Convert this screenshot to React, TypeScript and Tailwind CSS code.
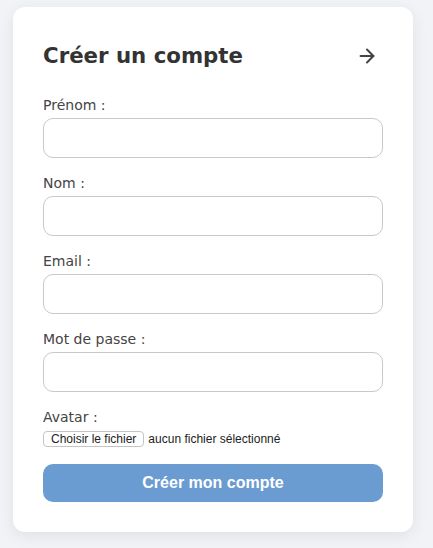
import { ArrowRight } from "lucide-react";

const fields = ["Prénom :", "Nom :", "Email :", "Mot de passe :"];

export default function App() {
  return (
    <div className="min-h-[548px] bg-[#f2f3f7] pl-[13px] pt-[7px] pb-[17px]">
      <div className="w-[400px] rounded-[12px] bg-white px-[30px] pt-[35px] pb-[30px] shadow-[0_4px_16px_rgba(0,0,0,0.08)] font-['DejaVu_Sans',sans-serif]">
        <div className="flex items-center justify-between">
          <h2 className="text-[21.3px] font-bold leading-[28px] text-[#333]">
            Créer un compte
          </h2>
          <ArrowRight className="mr-[5px] h-[22px] w-[22px] text-[#444]" strokeWidth={2.2} />
        </div>

        <form className="mt-[26px] flex flex-col">
          {fields.map((label) => (
            <div key={label} className="mb-[16px] flex flex-col">
              <label className="mb-[4px] text-[14px] leading-[18px] text-[#444]">
                {label}
              </label>
              <input
                type="text"
                className="h-[40px] w-full rounded-[10px] border border-[#c9c9c9] bg-white px-3 outline-none"
              />
            </div>
          ))}

          <div className="flex flex-col">
            <label className="mb-[4px] text-[14px] leading-[18px] text-[#444]">
              Avatar :
            </label>
            <div className="flex items-center gap-[4px] font-['Liberation_Sans',sans-serif] text-[12px] text-[#222]">
              <span className="rounded-[4px] border border-[#c4c4c4] bg-white px-[7px] leading-[14px]">
                Choisir le fichier
              </span>
              <span>aucun fichier sélectionné</span>
            </div>
          </div>

          <button
            type="button"
            className="mt-[16px] h-[38px] w-full rounded-[10px] bg-[#6a9bd1] font-['Liberation_Sans',sans-serif] text-[16px] font-bold text-white"
          >
            Créer mon compte
          </button>
        </form>
      </div>
    </div>
  );
}
